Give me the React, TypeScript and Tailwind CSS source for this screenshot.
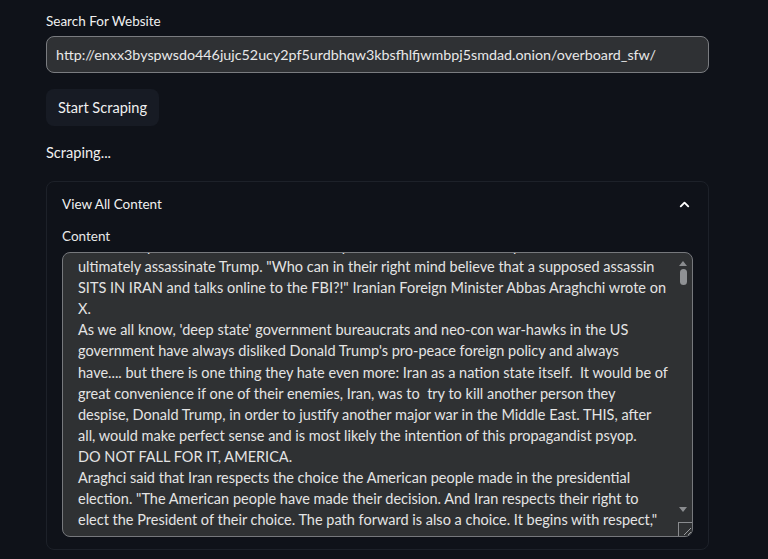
import React from 'react'
import { ChevronUp } from 'lucide-react'

const url = 'http://enxx3byspwsdo446jujc52ucy2pf5urdbhqw3kbsfhlfjwmbpj5smdad.onion/overboard_sfw/'

const lines = [
  'killed Trump. The FBI claimed an Iranian operative was tasked with a plan to',
  'ultimately assassinate Trump. "Who can in their right mind believe that a supposed assassin',
  'SITS IN IRAN and talks online to the FBI?!" Iranian Foreign Minister Abbas Araghchi wrote on',
  'X.',
  "As we all know, 'deep state' government bureaucrats and neo-con war-hawks in the US",
  "government have always disliked Donald Trump's pro-peace foreign policy and always",
  'have.... but there is one thing they hate even more: Iran as a nation state itself.  It would be of',
  'great convenience if one of their enemies, Iran, was to  try to kill another person they',
  'despise, Donald Trump, in order to justify another major war in the Middle East. THIS, after',
  'all, would make perfect sense and is most likely the intention of this propagandist psyop.',
  'DO NOT FALL FOR IT, AMERICA.',
  'Araghci said that Iran respects the choice the American people made in the presidential',
  'election. "The American people have made their decision. And Iran respects their right to',
  'elect the President of their choice. The path forward is also a choice. It begins with respect,"',
]

const ScrollBar = () => (
  <div className="absolute right-[4px] top-[6px] bottom-[22px] flex w-[10px] flex-col items-center">
    <svg width="10" height="8" viewBox="0 0 10 8">
      <path d="M1 7 L5 2 L9 7 Z" fill="#8a8c8f" />
    </svg>
    <div className="mt-[2px] h-[16px] w-[7px] rounded-full bg-[#8f9194]" />
    <div className="flex-1" />
    <svg width="10" height="8" viewBox="0 0 10 8">
      <path d="M1 1 L5 6 L9 1 Z" fill="#8a8c8f" />
    </svg>
  </div>
)

export default function App() {
  return (
    <div
      className="min-h-screen w-full bg-[#0f1219] text-[#fafafa]"
      style={{ fontFamily: 'Lato, "Noto Sans", sans-serif' }}
    >
      <div className="flex w-[709px] flex-col pl-[46px] pt-[12px]">
        <label className="text-[13.5px] leading-[18px] text-[#f0f0f0]">Search For Website</label>
        <div className="mt-[6px] flex h-[37px] items-center rounded-[8px] border border-[#7a7c80] bg-[#2f3134] pl-[9px]">
          <span className="whitespace-nowrap text-[14.3px] text-[#e8e8e8]">{url}</span>
        </div>

        <div className="mt-[16px]">
          <button className="h-[37px] rounded-[8px] bg-[#171b24] px-[12px] text-[14.6px] text-[#f0f0f0]">
            Start Scraping
          </button>
        </div>

        <div className="mt-[16px] text-[14.6px] leading-[22px] text-[#f0f0f0]">Scraping...</div>

        <div className="mt-[17px] flex h-[369px] flex-col rounded-[8px] border border-[#1d2129] px-[15px]">
          <div className="flex h-[44px] items-center justify-between pt-[1px]">
            <span className="text-[13.5px] text-[#f0f0f0]">View All Content</span>
            <ChevronUp size={15} strokeWidth={3} className="mr-[1px] text-white" />
          </div>
          <div className="mt-[1px] text-[13.5px] leading-[18px] text-[#e8e8e8]">Content</div>
          <div className="relative mt-[7px] h-[285px] overflow-hidden rounded-[8px] border border-[#76787c] bg-[#2f3133]">
            <div className="mt-[-18px] pl-[15px] pr-[24px]">
              {lines.map((l, i) => (
                <div key={i} className="whitespace-pre text-[14.5px] leading-[21.1px] text-[#e4e4e4]">
                  {l}
                </div>
              ))}
            </div>
            <ScrollBar />
            <div className="absolute bottom-0 right-0 h-[14px] w-[14px] border-l border-t border-[#8a8c8f] bg-[#2f3133]">
              <svg width="13" height="13" viewBox="0 0 13 13" className="absolute bottom-0 right-0">
                <path d="M12 5 L5 12 M12 9 L9 12" stroke="#9a9c9f" strokeWidth="1" />
              </svg>
            </div>
          </div>
        </div>
      </div>
    </div>
  )
}
